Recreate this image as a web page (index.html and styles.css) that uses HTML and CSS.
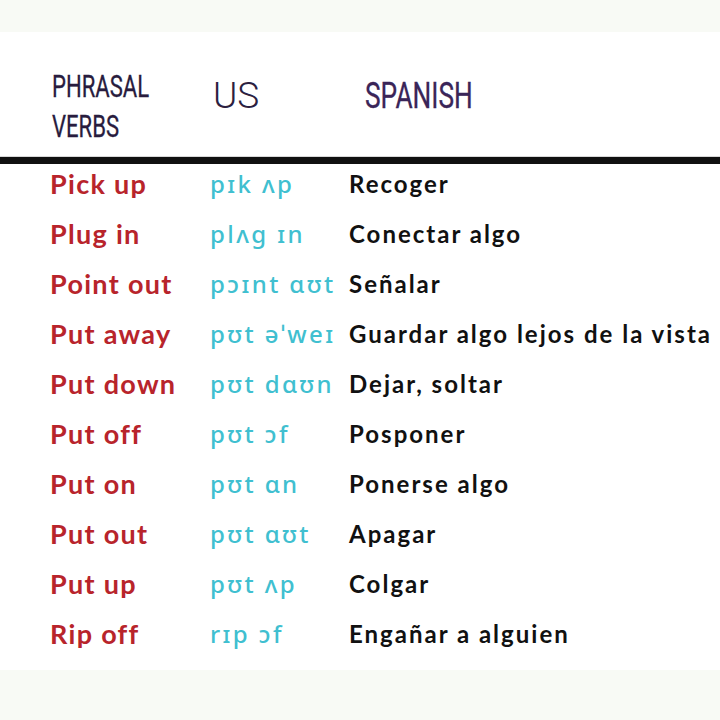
FILE: index.html
```html
<!DOCTYPE html>
<html lang="es">
<head>
<meta charset="utf-8">
<title>Phrasal verbs</title>
<link rel="stylesheet" href="styles.css">
</head>
<body>
<div class="band band-top"></div>
<main class="sheet">
  <header class="head">
    <div class="h-verbs"><span class="narrow">PHRASAL<br>VERBS</span></div>
    <div class="h-us">US</div>
    <div class="h-es"><span class="narrow">SPANISH</span></div>
  </header>
  <section class="rows">
    <div class="row"><span class="pv">Pick up</span><span class="ipa">pɪk ʌp</span><span class="es">Recoger</span></div>
    <div class="row"><span class="pv">Plug in</span><span class="ipa">plʌg ɪn</span><span class="es">Conectar algo</span></div>
    <div class="row"><span class="pv">Point out</span><span class="ipa">pɔɪnt ɑʊt</span><span class="es">Señalar</span></div>
    <div class="row"><span class="pv">Put away</span><span class="ipa">pʊt əˈweɪ</span><span class="es">Guardar algo lejos de la vista</span></div>
    <div class="row"><span class="pv">Put down</span><span class="ipa">pʊt dɑʊn</span><span class="es">Dejar, soltar</span></div>
    <div class="row"><span class="pv">Put off</span><span class="ipa">pʊt ɔf</span><span class="es">Posponer</span></div>
    <div class="row"><span class="pv">Put on</span><span class="ipa">pʊt ɑn</span><span class="es">Ponerse algo</span></div>
    <div class="row"><span class="pv">Put out</span><span class="ipa">pʊt ɑʊt</span><span class="es">Apagar</span></div>
    <div class="row"><span class="pv">Put up</span><span class="ipa">pʊt ʌp</span><span class="es">Colgar</span></div>
    <div class="row"><span class="pv">Rip off</span><span class="ipa">rɪp ɔf</span><span class="es">Engañar a alguien</span></div>
  </section>
</main>
<div class="band band-bottom"></div>
</body>
</html>
```
FILE: styles.css
```css
html, body {
  margin: 0;
  padding: 0;
  background: #ffffff;
}
body {
  width: 720px;
  height: 720px;
  overflow: hidden;
  display: flex;
  flex-direction: column;
  font-family: "Lato", "Noto Sans", sans-serif;
}
.band {
  background: #f8faf5;
}
.band-top {
  height: 32px;
}
.band-bottom {
  flex: 1;
}
.sheet {
  background: #ffffff;
  height: 638px;
}
.head {
  display: grid;
  grid-template-columns: 161px 152px 1fr;
  padding: 34px 0 9px 52px;
  height: 81px;
  border-bottom: 1px solid #d8d8d8;
}
.narrow {
  display: inline-block;
  transform: scaleX(0.69);
  transform-origin: left top;
  white-space: nowrap;
}
.h-verbs {
  font-family: "Roboto", sans-serif;
  font-weight: 400;
  font-size: 32px;
  line-height: 40px;
  color: #281c3e;
  -webkit-text-stroke: 0.3px #281c3e;
}
.h-us {
  font-family: "Roboto", sans-serif;
  font-weight: 300;
  font-size: 37px;
  line-height: 40px;
  color: #2b2040;
  padding-top: 10px;
}
.h-es {
  font-family: "Roboto", sans-serif;
  font-weight: 400;
  font-size: 37px;
  line-height: 40px;
  color: #3a2558;
  padding-top: 10px;
  -webkit-text-stroke: 0.3px #3a2558;
}
.h-es .narrow {
  transform: scaleX(0.71);
}
.rows {
  border-top: 7px solid #111111;
}
.row {
  display: grid;
  grid-template-columns: 160px 139px 1fr;
  padding-left: 50px;
  height: 50px;
  line-height: 40px;
  white-space: nowrap;
}
.pv {
  font-family: "Lato", sans-serif;
  font-weight: 700;
  font-size: 27px;
  letter-spacing: 1.3px;
  color: #b8242b;
}
.ipa {
  font-family: "Noto Sans", "DejaVu Sans", sans-serif;
  font-weight: 500;
  font-size: 24px;
  letter-spacing: 2.4px;
  color: #40bfd0;
}
.es {
  font-family: "Lato", sans-serif;
  font-weight: 700;
  font-size: 24px;
  letter-spacing: 2px;
  color: #111111;
}
```
